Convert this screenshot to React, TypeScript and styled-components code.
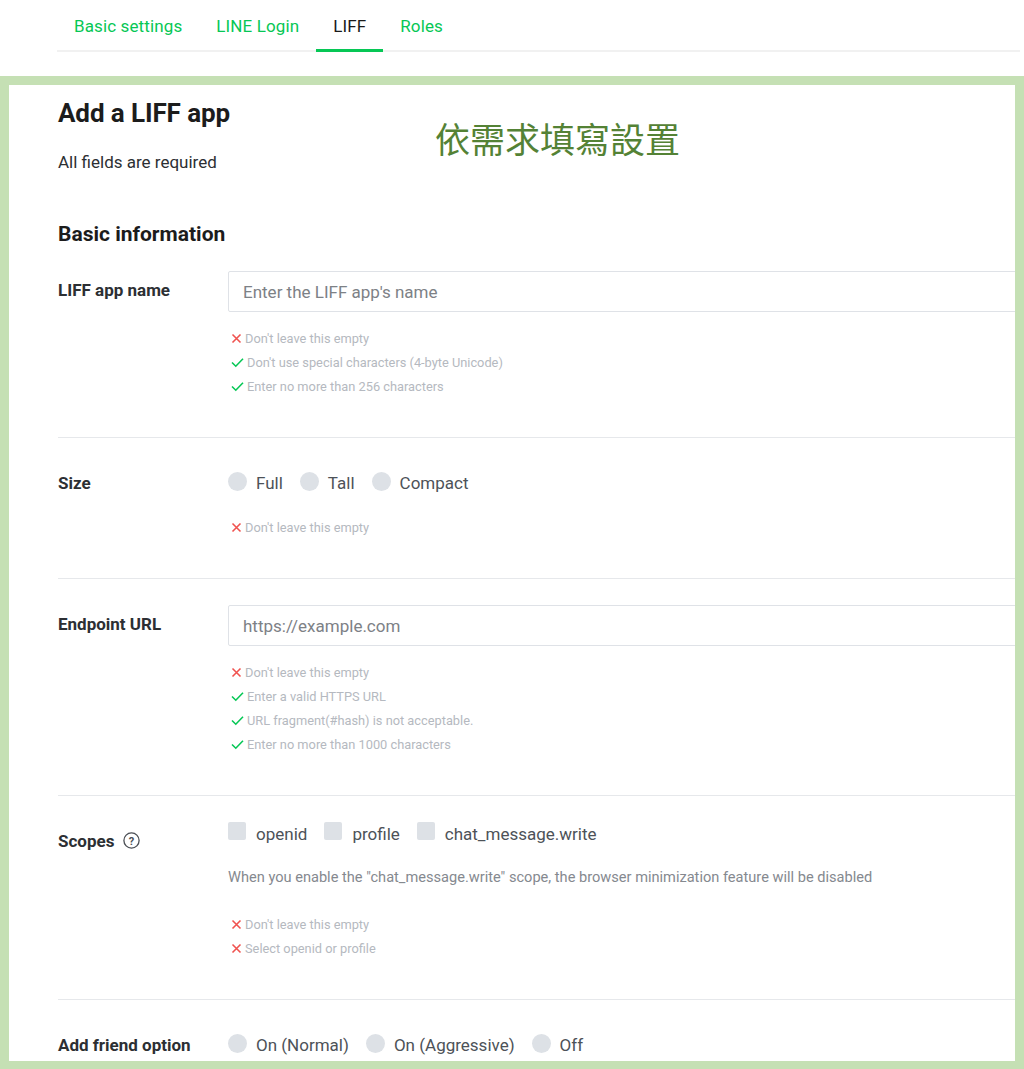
import styled, {createGlobalStyle} from "styled-components";

const GlobalStyle = createGlobalStyle`
    html, body {
        margin: 0;
        padding: 0;
        background: #fff;
    }

    body {
        font-family: Roboto, "Noto Sans", "Liberation Sans", sans-serif;
        color: #2c2f33;
    }
`

const StyledPage = styled.div`
    width: 1024px;
    height: 1069px;
    overflow: hidden;
    display: flex;
    flex-direction: column;
`

const StyledTopBar = styled.div`
    height: 76px;
    padding: 0 4px 0 57px;
    box-sizing: border-box;
`

const StyledTabs = styled.nav`
    display: flex;
    height: 52px;
    border-bottom: 2px solid #f1f1f1;
    box-sizing: border-box;
    padding-top: 2px;
`

const StyledTab = styled.span<{ $active?: boolean }>`
    position: relative;
    padding: 0 17px;
    font-size: 17px;
    line-height: 48px;
    height: 48px;
    letter-spacing: 0.12px;
    color: ${p => p.$active ? "#1a1a1a" : "#06c755"};
    
    &::after {
        content: "";
        display: ${p => p.$active ? "block" : "none"};
        position: absolute;
        left: 0;
        right: 0;
        bottom: -2px;
        height: 3px;
        background: #06c755;
    }
`

const StyledFrame = styled.div`
    position: relative;
    flex: 1;
    border: 9px solid #c5e0b4;
    border-bottom-width: 8px;
    overflow: hidden;
`

const StyledContent = styled.div`
    padding-left: 49px;
`

const StyledTitle = styled.h1`
    margin: 12px 0 0;
    font-size: 26px;
    line-height: 32px;
    font-weight: 700;
    letter-spacing: -0.1px;
    color: #1c1c1c;
`

const StyledIntro = styled.p`
    margin: 21px 0 0;
    font-size: 17px;
    line-height: 24px;
    color: #2c2f33;
`

const StyledHeading = styled.h2`
    margin: 49px 0 0;
    font-size: 21px;
    line-height: 22px;
    font-weight: 700;
    color: #1c1c1c;
`

const StyledNote = styled.div`
    position: absolute;
    left: 426px;
    top: 28px;
    font-family: "Noto Sans CJK TC", "Noto Sans CJK SC", sans-serif;
    font-size: 35px;
    line-height: 50px;
    color: #548235;
`

const StyledSection = styled.div`
    display: flex;
    padding: 26px 0 39px;
    border-bottom: 1px solid #e6e8eb;
`

const StyledLabel = styled.div`
    width: 170px;
    flex-shrink: 0;
    display: flex;
    align-items: center;
    gap: 9px;
    height: 37px;
    font-size: 17px;
    font-weight: 700;
    color: #2c2f33;
`

const StyledField = styled.div`
    flex: 1;
    min-width: 900px;
`

const StyledInput = styled.input`
    display: block;
    width: 100%;
    height: 41px;
    box-sizing: border-box;
    border: 1px solid #dfe2e7;
    border-radius: 2px;
    padding: 0 14px;
    font-family: inherit;
    font-size: 17px;
    color: #2c2f33;
    outline: none;
    
    &::placeholder {
        color: #7d8186;
    }
`

const StyledOptionRow = styled.div<{ $height: number }>`
    display: flex;
    align-items: ${p => p.$height > 30 ? "center" : "flex-start"};
    height: ${p => p.$height}px;
`

const StyledOption = styled.label`
    display: flex;
    align-items: center;
    margin-right: 17px;
    font-size: 17px;
    line-height: 24px;
    color: #4d5258;
`

const StyledRadio = styled.span`
    width: 19px;
    height: 19px;
    border-radius: 50%;
    background: #dde1e6;
    margin: 0 9px 3px 0;
`

const StyledCheckbox = styled.span`
    width: 18px;
    height: 18px;
    border-radius: 2px;
    background: #dde1e6;
    margin: 0 10px 6px 0;
`

const StyledHint = styled.p`
    margin: 21px 0 0;
    font-size: 14.6px;
    line-height: 20px;
    color: #85898f;
`

const StyledRules = styled.ul<{ $gap: number }>`
    list-style: none;
    margin: ${p => p.$gap}px 0 0;
    padding: 0;
`

const StyledRule = styled.li`
    display: flex;
    align-items: center;
    gap: 3px;
    height: 24px;
    padding-left: 3px;
    font-size: 12.8px;
    color: #b5b9c0;
`

const CrossIcon = () => (
    <svg width="11" height="11" viewBox="0 0 11 11">
        <path d="M1.5 1.5 L9.5 9.5 M9.5 1.5 L1.5 9.5" stroke="#f0524f" strokeWidth="1.6" fill="none"/>
    </svg>
)

const CheckIcon = () => (
    <svg width="13" height="11" viewBox="0 0 13 11">
        <path d="M1 5.5 L4.8 9.2 L12 1.8" stroke="#06c755" strokeWidth="1.6" fill="none"/>
    </svg>
)

const HelpIcon = () => (
    <svg width="17" height="17" viewBox="0 0 17 17">
        <circle cx="8.5" cy="8.5" r="7.6" stroke="#4a4e54" strokeWidth="1.3" fill="none"/>
        <text x="8.5" y="12.6" textAnchor="middle" fontSize="11" fontFamily="Roboto, sans-serif" fill="#4a4e54">?</text>
    </svg>
)

type Rule = [boolean, string]

const Rules = ({rules, gap = 14}: { rules: Rule[], gap?: number }) => (
    <StyledRules $gap={gap}>
        {rules.map(([ok, text]) => (
            <StyledRule key={text}>
                {ok ? <CheckIcon/> : <CrossIcon/>}
                {text}
            </StyledRule>
        ))}
    </StyledRules>
)

const RadioGroup = ({options}: { options: string[] }) => (
    <StyledOptionRow $height={37}>
        {options.map(option => (
            <StyledOption key={option}>
                <StyledRadio/>
                {option}
            </StyledOption>
        ))}
    </StyledOptionRow>
)

const tabs = ["Basic settings", "LINE Login", "LIFF", "Roles"]

export default function App() {
    return <>
        <GlobalStyle/>
        <StyledPage>
            <StyledTopBar>
                <StyledTabs>
                    {tabs.map(tab => <StyledTab key={tab} $active={tab === "LIFF"}>{tab}</StyledTab>)}
                </StyledTabs>
            </StyledTopBar>

            <StyledFrame>
                <StyledNote>依需求填寫設置</StyledNote>
                <StyledContent>
                    <StyledTitle>Add a LIFF app</StyledTitle>
                    <StyledIntro>All fields are required</StyledIntro>
                    <StyledHeading>Basic information</StyledHeading>

                    <StyledSection>
                        <StyledLabel>LIFF app name</StyledLabel>
                        <StyledField>
                            <StyledInput placeholder="Enter the LIFF app's name"/>
                            <Rules rules={[
                                [false, "Don't leave this empty"],
                                [true, "Don't use special characters (4-byte Unicode)"],
                                [true, "Enter no more than 256 characters"],
                            ]}/>
                        </StyledField>
                    </StyledSection>

                    <StyledSection>
                        <StyledLabel>Size</StyledLabel>
                        <StyledField>
                            <RadioGroup options={["Full", "Tall", "Compact"]}/>
                            <Rules rules={[[false, "Don't leave this empty"]]}/>
                        </StyledField>
                    </StyledSection>

                    <StyledSection>
                        <StyledLabel>Endpoint URL</StyledLabel>
                        <StyledField>
                            <StyledInput placeholder="https://example.com"/>
                            <Rules rules={[
                                [false, "Don't leave this empty"],
                                [true, "Enter a valid HTTPS URL"],
                                [true, "URL fragment(#hash) is not acceptable."],
                                [true, "Enter no more than 1000 characters"],
                            ]}/>
                        </StyledField>
                    </StyledSection>

                    <StyledSection>
                        <StyledLabel>Scopes <HelpIcon/></StyledLabel>
                        <StyledField>
                            <StyledOptionRow $height={24}>
                                {["openid", "profile", "chat_message.write"].map(scope => (
                                    <StyledOption key={scope}>
                                        <StyledCheckbox/>
                                        {scope}
                                    </StyledOption>
                                ))}
                            </StyledOptionRow>
                            <StyledHint>
                                When you enable the "chat_message.write" scope, the browser minimization feature will be disabled
                            </StyledHint>
                            <Rules gap={25} rules={[
                                [false, "Don't leave this empty"],
                                [false, "Select openid or profile"],
                            ]}/>
                        </StyledField>
                    </StyledSection>

                    <StyledSection>
                        <StyledLabel>Add friend option</StyledLabel>
                        <StyledField>
                            <RadioGroup options={["On (Normal)", "On (Aggressive)", "Off"]}/>
                        </StyledField>
                    </StyledSection>
                </StyledContent>
            </StyledFrame>
        </StyledPage>
    </>
}
